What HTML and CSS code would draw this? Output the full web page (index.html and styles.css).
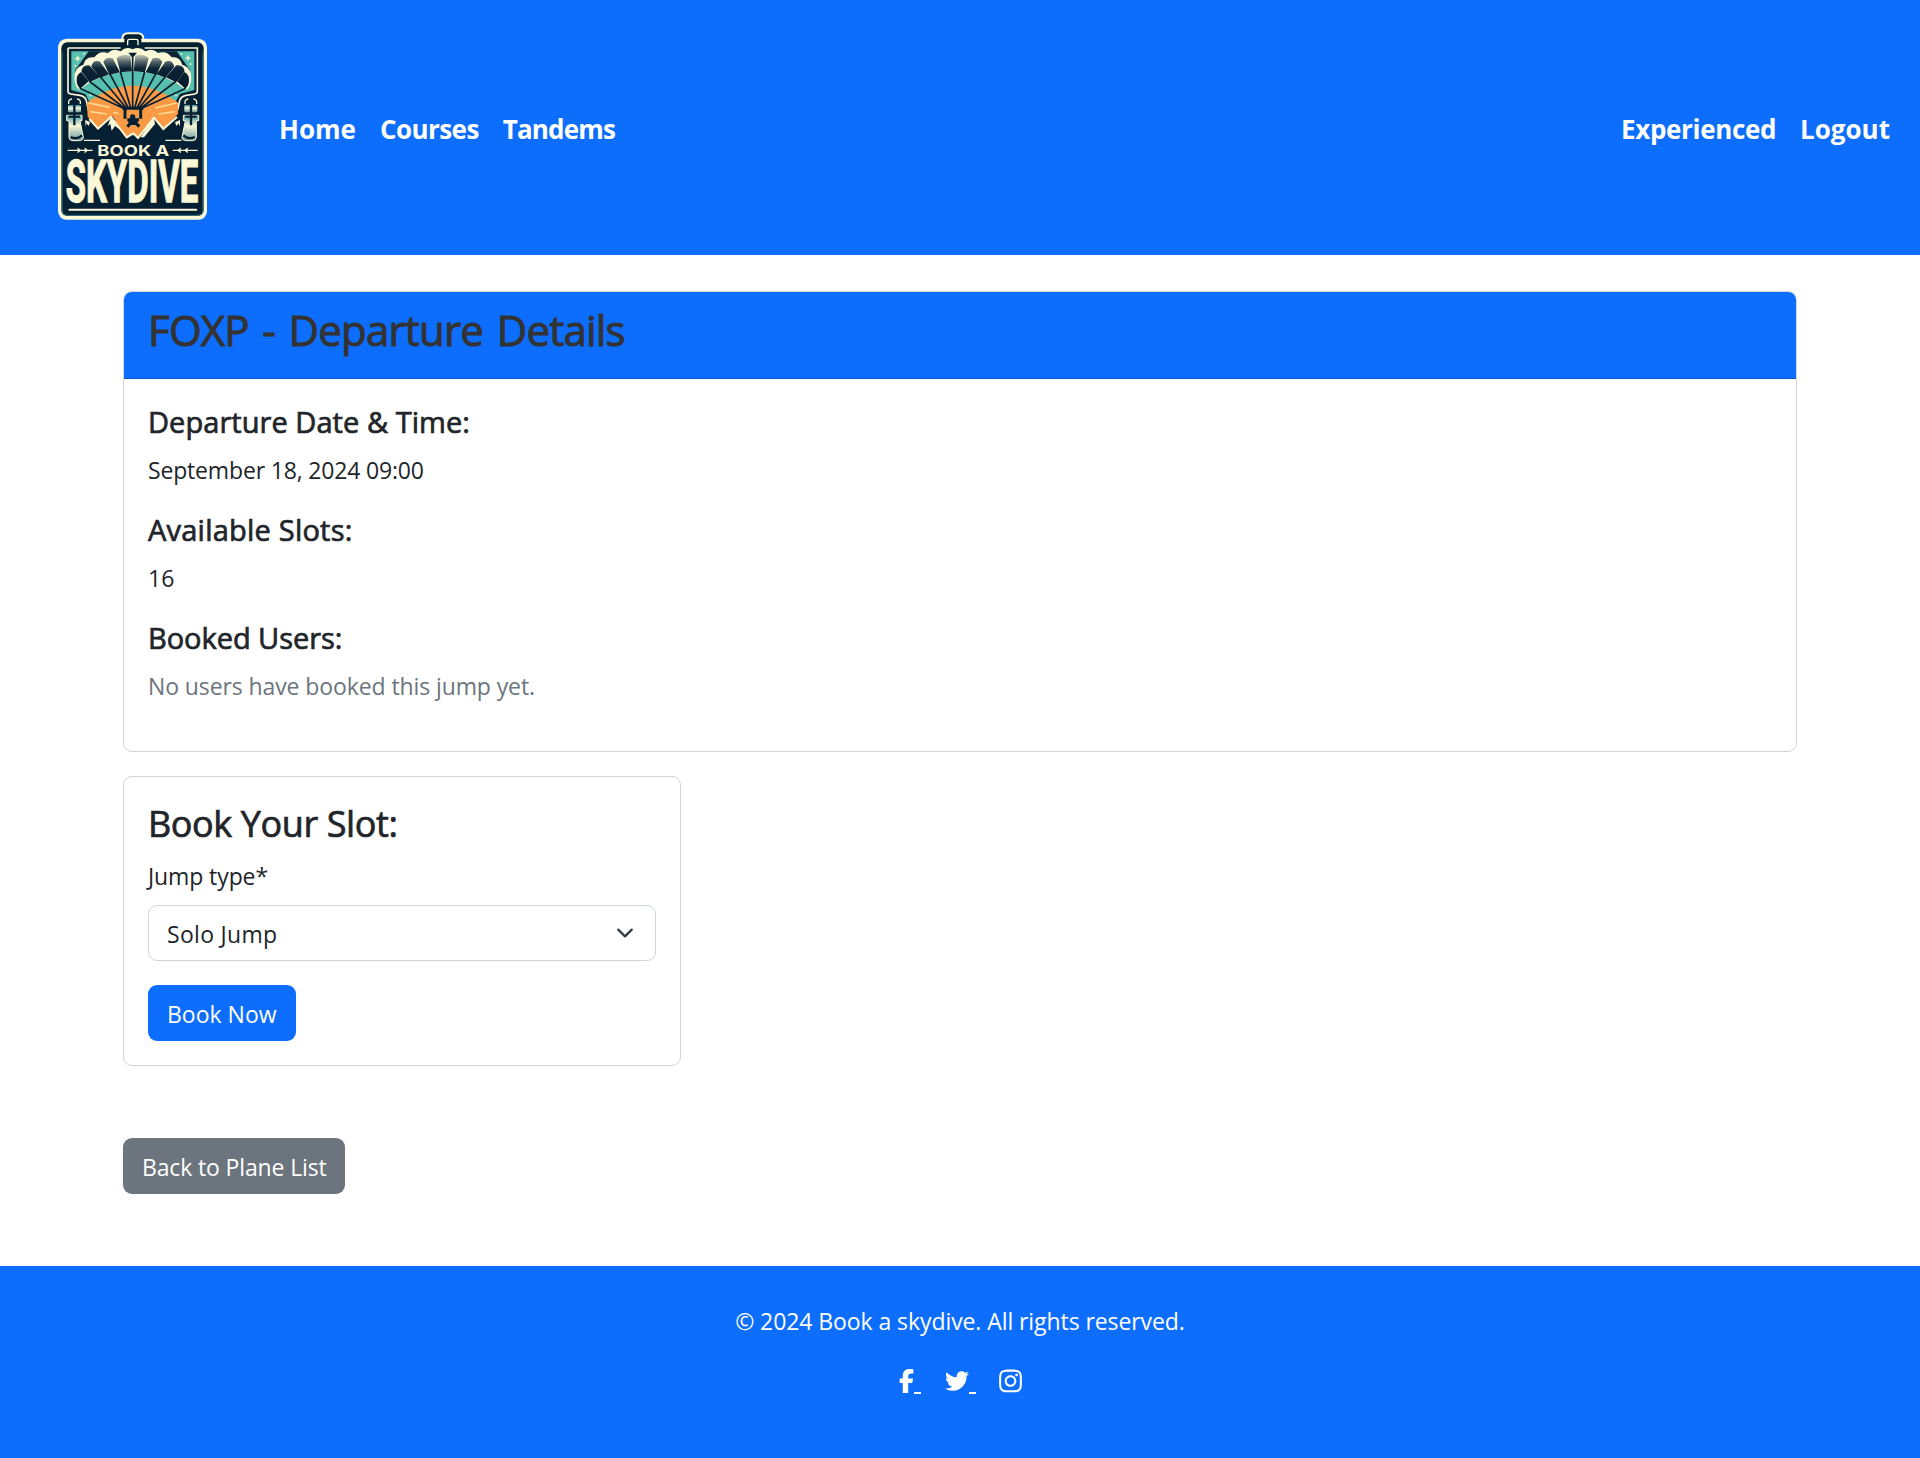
FILE: index.html
```
<!DOCTYPE html>
<html lang="en">
<head>
<meta charset="utf-8">
<title>Book a Skydive</title>
<link rel="stylesheet" href="styles.css">
</head>
<body>
<header class="navbar">
  <a class="brand" href="#" aria-label="Book a Skydive">
    <svg class="logo" viewBox="0 0 570 630">
      <defs>
        <linearGradient id="cell" x1="0" y1="0" x2="0" y2="1">
          <stop offset="0" stop-color="#c9ccb8"/><stop offset=".2" stop-color="#56676c"/><stop offset=".4" stop-color="#0b2436"/><stop offset="1" stop-color="#04192b"/>
        </linearGradient>
        <linearGradient id="can" x1="0" y1="0" x2="0" y2="1">
          <stop offset="0" stop-color="#3f93a4"/><stop offset=".4" stop-color="#fbf8d8"/><stop offset="1" stop-color="#6c9aa0"/>
        </linearGradient>
      </defs>
      <path d="M247 70V57Q247 40 264 40H293Q310 40 310 57V70" fill="#051f33" stroke="#fbf8d8" stroke-width="6"/>
      <rect x="54" y="56" width="447" height="543" rx="26" fill="#fbf8d8"/>
      <rect x="64" y="67" width="427" height="521" rx="18" fill="#051f33"/>
      <path d="M66 100V570Q66 586 84 586H471Q489 586 489 570V100" fill="none" stroke="#3d7d86" stroke-width="3"/>
      <path d="M253 80V62Q253 48 265 48H292Q304 48 304 62V80" fill="#051f33"/>
      <path d="M263 76V63Q263 58 269 58H288Q294 58 294 63V76" fill="none" stroke="#fbf8d8" stroke-width="4"/>
      <path d="M84 84H242M314 84H472V214Q472 221 464 222L438 226Q420 230 418 246L413 270M84 84V214Q84 221 92 222L120 226Q138 230 140 246L145 270" fill="none" stroke="#fbf8d8" stroke-width="5"/>
      <path d="M94 94H463V210L420 222L404 250H150L136 222L94 210Z" fill="#57bfae"/>
      <path d="M146 94H410L450 150V190H106V150Z" fill="#0b2436"/>
      <path d="M134 196Q278 100 422 196L402 254H152Z" fill="#57bfae"/>
      <path d="M141 248Q205 198 278 197Q350 198 414 248V282L386 312L340 350L280 358L175 330L143 290Z" fill="#fb9a45"/>
      <path d="M145 249L210 262M150 275L200 282M410 249L345 264M405 275L355 282M220 277L235 281" stroke="#fbd98e" stroke-width="5"/>
      <path d="M136 330V296L147 297L175 326L216 288L262 340L298 352L342 289L372 328L412 290L422 330V364L340 372H180Z" fill="#051f33"/>
      <path d="M220 298L260 352L280 338L296 352L336 300L300 312H250Z" fill="#fb9a45"/>
      <path d="M148 297L174 326L213 291L260 352L280 340L294 354L342 293L370 327L411 291" fill="none" stroke="#fbf8d8" stroke-width="6"/>
      <path d="M213 291L203 318L211 312L215 332L225 318L238 328ZM342 293L301 352H312L345 312ZM136 300L150 306L146 318L139 310L136 320ZM420 300L405 306L409 318L416 310L420 320Z" fill="#fbf8d8"/>
      <path d="M104 184Q99 143 130 134Q136 108 163 112Q178 90 204 99Q220 82 242 94Q258 77 278 88Q298 77 316 94Q336 82 354 99Q380 90 395 112Q420 108 427 134Q458 143 453 184Q449 206 437 210L410 190Q350 156 278 154Q205 156 145 190L119 210Q108 204 104 184Z" fill="#fbf8d8"/>
      <path d="M110 184Q108 164 124 156L146 184L121 206Q112 200 110 184ZM124 154Q128 132 148 136L180 172L149 187ZM154 140Q158 118 180 125L207 163L181 173ZM190 126Q198 108 218 115L240 157L208 164ZM230 115Q246 99 271 107L276 154L241 157ZM286 107Q311 99 326 115L315 157L281 154ZM338 115Q358 108 367 126L350 164L317 157ZM376 125Q398 118 403 140L376 173L350 163ZM409 136Q430 132 434 154L408 187L378 172ZM433 156Q449 164 447 184Q445 200 436 206L411 184Z" fill="url(#cell)"/>
      <path d="M265 98H291L278 114Z" fill="#051f33"/>
      <path d="M119 205L249 264M147 183L253 264M181 170L259 264M209 160L265 264M241 155L272 264M278 112V264M314 155L284 264M348 160L291 264M376 170L297 264M409 183L303 264M438 205L307 264" stroke="#051f33" stroke-width="5"/>
      <path d="M247 265H310M255 266V296M302 266V296M262 299H297M262 320L273 309H287L298 320" stroke="#051f33" stroke-width="9" fill="none"/>
      <circle cx="278" cy="291" r="8" fill="#051f33"/><path d="M263 298H295L291 315H267Z" fill="#051f33"/>
      <path d="M103 116L110 112L113 104L116 112L123 116L116 119L113 127L110 119ZM434 114L441 111L444 103L447 111L454 114L447 117L444 125L441 117Z" fill="#e3efcf"/>
      <circle cx="132" cy="101" r="3" fill="#e3efcf"/><circle cx="424" cy="102" r="3" fill="#e3efcf"/><circle cx="106" cy="137" r="3" fill="#e3efcf"/><circle cx="452" cy="132" r="3" fill="#e3efcf"/><circle cx="151" cy="226" r="3" fill="#e3efcf"/><circle cx="408" cy="226" r="3" fill="#e3efcf"/>
      <g id="pack"><path d="M86 252Q84 238 96 237M121 252Q123 238 111 237" stroke="#fbf8d8" stroke-width="4" fill="none"/><rect x="84" y="255" width="39" height="22" rx="4" fill="url(#can)"/><path d="M80 286H126V302H120L130 352Q130 362 116 362H99Q87 362 87 352V302H80Z" fill="url(#can)" stroke="#fbf8d8" stroke-width="3"/><path d="M103 236V316M86 290H120" stroke="#051f33" stroke-width="7"/><path d="M92 351Q110 360 126 346" stroke="#051f33" stroke-width="7" fill="none"/></g>
      <use href="#pack" transform="translate(556 0) scale(-1 1)"/>
      <path d="M132 361H180M376 361H424M83 391H158M398 391H473" stroke="#fbf8d8" stroke-width="4"/>
      <path d="M113 384L122 391L113 398M134 384L143 391L134 398M443 384L434 391L443 398M422 384L413 391L422 398" fill="#fbf8d8" stroke="#fbf8d8" stroke-width="3"/>
      <text class="logo-top" x="172" y="407" textLength="216" lengthAdjust="spacingAndGlyphs">BOOK A</text>
      <text class="logo-main" x="77" y="546" textLength="398" lengthAdjust="spacingAndGlyphs">SKYDIVE</text>
      <path d="M88 569H469" stroke="#fbf8d8" stroke-width="6" stroke-linecap="round"/>
    </svg>
  </a>
  <nav class="nav">
    <a href="#">Home</a>
    <a class="n-courses" href="#">Courses</a>
    <a class="n-tandems" href="#">Tandems</a>
  </nav>
  <nav class="nav nav-end">
    <a class="n-exp" href="#">Experienced</a>
    <a href="#">Logout</a>
  </nav>
</header>
<main class="container">
  <section class="card">
    <div class="card-header"><h1 class="title">FOXP - Departure Details</h1></div>
    <div class="card-body">
      <h2 class="label">Departure Date &amp; Time:</h2>
      <p class="date">September 18, 2024 09:00</p>
      <h2 class="label label-slots">Available Slots:</h2>
      <p>16</p>
      <h2 class="label label-users">Booked Users:</h2>
      <p class="muted">No users have booked this jump yet.</p>
    </div>
  </section>
  <section class="card booking">
    <h2 class="booking-title">Book Your Slot:</h2>
    <div class="field-label">Jump type*</div>
    <div class="select">
      <span>Solo Jump</span>
      <svg class="chevron" viewBox="0 0 16 16"><path d="m2 5 6 6 6-6" fill="none" stroke="#343a40" stroke-width="2" stroke-linecap="round" stroke-linejoin="round"/></svg>
    </div>
    <a class="btn primary" href="#">Book Now</a>
  </section>
  <a class="btn secondary" href="#">Back to Plane List</a>
</main>
<footer class="footer">
  <p>© 2024 Book a skydive. All rights reserved.</p>
  <div class="social">
    <a class="fb" href="#" aria-label="Facebook"><svg viewBox="14 0 292 512"><path d="M80 299.300V512H196V299.300h86.500l18-97.800H196V166.900c0-51.700 20.300-71.500 72.700-71.500 16.300 0 29.400.4 37 1.200V7.900C291.400 4 256.400 0 236.200 0 129.300 0 80 50.500 80 159.400v42.100H14v97.800H80z"/></svg><i></i></a>
    <a class="tw" href="#" aria-label="Twitter"><svg viewBox="0 0 512 512"><path d="M459.37 151.716c.325 4.548.325 9.097.325 13.645 0 138.72-105.583 298.558-298.558 298.558-59.452 0-114.68-17.219-161.137-47.106 8.447.974 16.568 1.299 25.34 1.299 49.055 0 94.213-16.568 130.274-44.832-46.132-.975-84.792-31.188-98.112-72.772 6.498.974 12.995 1.624 19.818 1.624 9.421 0 18.843-1.3 27.614-3.573-48.081-9.747-84.143-51.98-84.143-102.985v-1.299c13.969 7.797 30.214 12.67 47.431 13.319-28.264-18.843-46.781-51.005-46.781-87.391 0-19.492 5.197-37.36 14.294-52.954 51.655 63.675 129.3 105.258 216.365 109.807-1.624-7.797-2.599-15.918-2.599-24.04 0-57.828 46.782-104.934 104.934-104.934 30.213 0 57.502 12.67 76.67 33.137 23.715-4.548 46.456-13.32 66.599-25.34-7.798 24.366-24.366 44.833-46.132 57.827 21.117-2.273 41.584-8.122 60.426-16.243-14.292 20.791-32.161 39.308-52.628 54.253z"/></svg><i></i></a>
    <a class="ig" href="#" aria-label="Instagram"><svg viewBox="0 0 448 512"><path d="M224.1 141c-63.6 0-114.9 51.3-114.9 114.9s51.3 114.9 114.9 114.9S339 319.5 339 255.900 287.700 141 224.100 141zm0 189.600c-41.100 0-74.700-33.500-74.700-74.700s33.500-74.700 74.700-74.700 74.700 33.500 74.700 74.700-33.600 74.700-74.700 74.700zm146.400-194.300c0 14.900-12 26.800-26.800 26.800-14.900 0-26.800-12-26.800-26.800s12-26.800 26.800-26.800 26.800 12 26.800 26.800zm76.100 27.200c-1.700-35.900-9.900-67.700-36.200-93.900-26.200-26.200-58-34.400-93.900-36.200-37-2.100-147.900-2.100-184.900 0-35.800 1.700-67.600 9.900-93.900 36.100s-34.400 58-36.200 93.900c-2.100 37-2.100 147.900 0 184.900 1.700 35.900 9.900 67.700 36.200 93.900s58 34.400 93.900 36.200c37 2.100 147.900 2.100 184.900 0 35.900-1.700 67.700-9.900 93.900-36.200 26.200-26.200 34.400-58 36.200-93.900 2.100-37 2.100-147.800 0-184.800zM398.800 388c-7.800 19.600-22.900 34.700-42.600 42.600-29.500 11.700-99.500 9-132.100 9s-102.700 2.600-132.100-9c-19.600-7.800-34.700-22.900-42.600-42.600-11.700-29.500-9-99.500-9-132.100s-2.600-102.700 9-132.100c7.800-19.600 22.900-34.700 42.600-42.600 29.500-11.700 99.500-9 132.100-9s102.700-2.600 132.100 9c19.600 7.800 34.700 22.900 42.600 42.600 11.700 29.500 9 99.500 9 132.100s2.700 102.700-9 132.100z"/></svg></a>
  </div>
</footer>
</body>
</html>
```
FILE: styles.css
```
* { box-sizing: border-box; }
body {
  margin: 0;
  font: 23px/36px "Open Sans", "Noto Sans", sans-serif;
  color: #212529;
  background: #fff;
}
a { color: inherit; text-decoration: none; }
h1, h2, p { margin: 0; }
.navbar {
  display: flex;
  align-items: center;
  height: 255px;
  padding: 0 30px 0 40px;
  background: #0d6efd;
  color: #fff;
}
.brand { display: block; height: 210px; margin-bottom: 5px; }
.logo { display: block; width: 190px; height: 210px; }
.logo-top { font: 700 45px Inter, sans-serif; fill: #fbf8d8; }
.logo-main { font: 700 180px Roboto, sans-serif; fill: #fbf8d8; stroke: #fbf8d8; stroke-width: 4px; }
.nav { display: flex; gap: 24px; margin-left: 49px; font-size: 26px; font-weight: 700; padding-top: 2px; }
.nav-end { margin-left: auto; }
.n-courses { letter-spacing: -.55px; }
.n-tandems { letter-spacing: -.85px; }
.n-exp { letter-spacing: -.35px; }
.container { padding: 36px 123px 72px; }
.card { border: 1px solid #d3d4d5; border-radius: 9px; overflow: hidden; }
.card-header { height: 87px; padding: 13px 24px 0; background: #0d6efd; border-bottom: 1px solid #0b5cd5; }
.title, .label, .booking-title { font-weight: 400; -webkit-text-stroke: .7px currentColor; }
.title { font-size: 42px; line-height: 50px; color: #333; letter-spacing: -.8px; word-spacing: 3.5px; -webkit-text-stroke-width: 1px; }
.card-body { padding: 25px 24px 23px; }
.label { font-size: 29px; line-height: 36px; margin-bottom: 12px; letter-spacing: .05px; }
.label-slots { letter-spacing: .22px; }
.label-users { letter-spacing: -.05px; }
.card-body p { margin-bottom: 24px; }
.date { letter-spacing: -.17px; }
.muted { color: #6c757d; letter-spacing: -.1px; }
.booking { width: 558px; height: 290px; margin-top: 24px; padding: 25px 24px 24px; }
.booking-title { font-size: 36px; line-height: 43px; letter-spacing: -.4px; }
.field-label { margin-top: 13px; letter-spacing: -.1px; }
.select {
  display: flex;
  align-items: center;
  justify-content: space-between;
  height: 56px;
  margin: 11px 0 24px;
  padding: 0 18px;
  border: 1px solid #ced4da;
  border-radius: 9px;
}
.select span { padding-top: 1px; letter-spacing: .3px; }
.chevron { width: 24px; height: 18px; }
.btn { display: inline-flex; align-items: center; height: 56px; padding: 1px 19px 0; border-radius: 9px; color: #fff; white-space: nowrap; }
.primary { background: #0d6efd; }
.secondary { background: #6c757d; margin-top: 72px; letter-spacing: -.14px; }
.container > .btn { display: flex; width: 222px; }
.footer { height: 192px; padding-top: 37px; background: #0d6efd; color: #fff; text-align: center; letter-spacing: -.08px; }
.social { display: flex; justify-content: center; margin-top: 29px; }
.social a { display: flex; align-items: flex-end; height: 26px; }
.social svg { display: block; fill: #fff; }
.social i { width: 7px; height: 2px; background: #fff; }
.fb svg { width: 15px; height: 24px; margin-bottom: 1px; }
.tw { margin-left: 24px; }
.tw svg { width: 24px; height: 24px; margin-bottom: 1px; }
.ig { margin-left: 23px; }
.ig svg { width: 23px; height: 26px; }
```
